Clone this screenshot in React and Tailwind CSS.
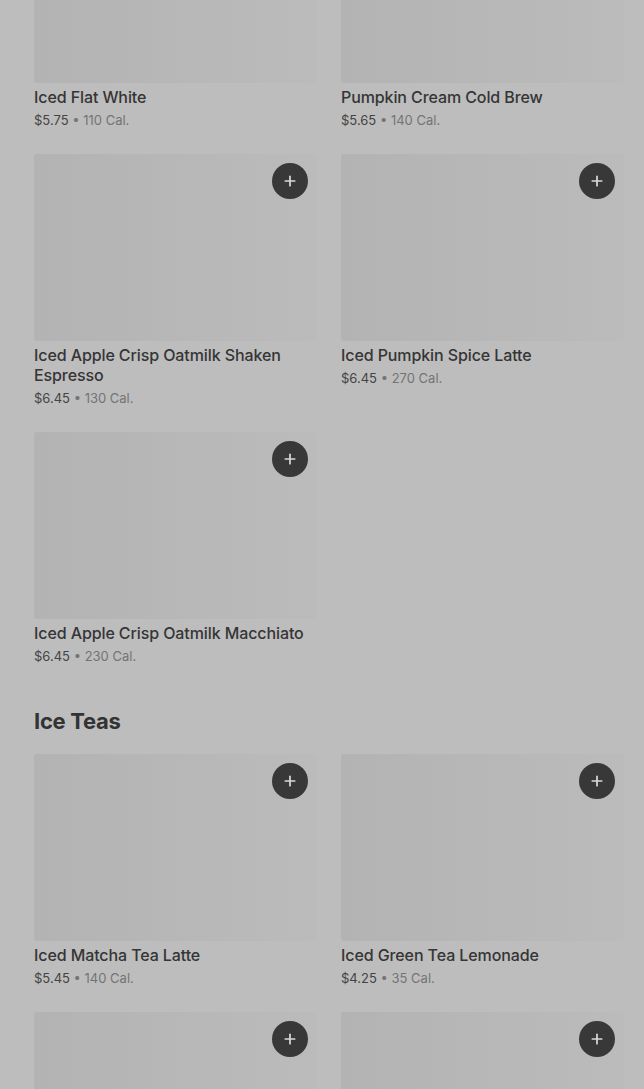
import { Plus } from 'lucide-react';

const coffees = [
  { name: 'Iced Flat White', price: '$5.75', cal: '110 Cal.' },
  { name: 'Pumpkin Cream Cold Brew', price: '$5.65', cal: '140 Cal.' },
  { name: 'Iced Apple Crisp Oatmilk Shaken Espresso', price: '$6.45', cal: '130 Cal.' },
  { name: 'Iced Pumpkin Spice Latte', price: '$6.45', cal: '270 Cal.' },
  { name: 'Iced Apple Crisp Oatmilk Macchiato', price: '$6.45', cal: '230 Cal.' },
];

const teas = [
  { name: 'Iced Matcha Tea Latte', price: '$5.45', cal: '140 Cal.' },
  { name: 'Iced Green Tea Lemonade', price: '$4.25', cal: '35 Cal.' },
  { name: 'Iced Black Tea', price: '$3.95', cal: '0 Cal.' },
  { name: 'Iced Passion Tango Tea', price: '$3.95', cal: '0 Cal.' },
];

const MenuItem = ({ item }) => (
  <div className="flex flex-col">
    {/* image placeholder */}
    <div className="relative h-[187px] rounded-[3px] bg-gradient-to-r from-[#b3b3b3] to-[#bbbbbb]">
      <button className="absolute top-[9px] right-[9px] w-9 h-9 rounded-full bg-[#383838] flex items-center justify-center">
        <Plus size={16} strokeWidth={2.6} className="text-[#d9d9d9]" />
      </button>
    </div>
    <div className="mt-1 text-[16px] leading-[20px] font-medium text-[#353535] tracking-[-0.1px]">{item.name}</div>
    <div className="mt-[4px] text-[13px] leading-[18px]">
      <span className="text-[#444]">{item.price}</span>
      <span className="text-[#747474]"> • {item.cal}</span>
    </div>
  </div>
);

export default function App() {
  return (
    <div
      className="h-[1089px] w-full overflow-hidden bg-[#bdbdbd]"
      style={{ fontFamily: 'Inter, "Noto Sans", sans-serif' }}
    >
      <div className="-mt-[104px] pl-[34px] pr-[20px]">
        <div className="grid grid-cols-2 gap-x-6 gap-y-[25px]">
          {coffees.map((item) => (
            <MenuItem key={item.name} item={item} />
          ))}
        </div>

        <h2 className="mt-[40px] mb-[17px] text-[22px] leading-[32px] font-bold text-[#333] tracking-[-0.3px]">
          Ice Teas
        </h2>

        <div className="grid grid-cols-2 gap-x-6 gap-y-[25px]">
          {teas.map((item) => (
            <MenuItem key={item.name} item={item} />
          ))}
        </div>
      </div>
    </div>
  );
}
